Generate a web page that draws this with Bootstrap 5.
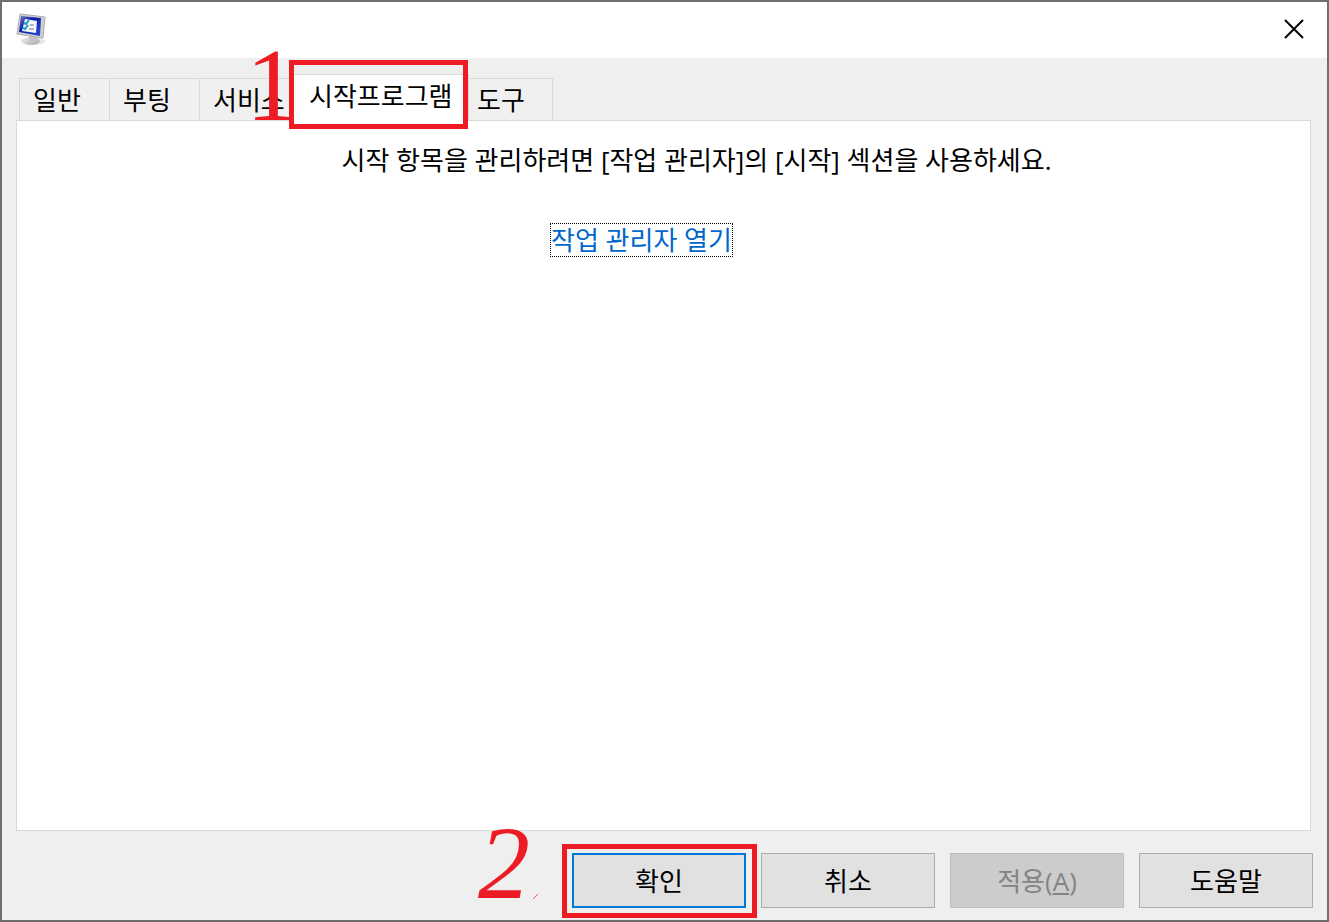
<!DOCTYPE html>
<html lang="ko">
<head>
<meta charset="utf-8">
<meta name="viewport" content="width=device-width, initial-scale=1">
<title>시스템 구성</title>
<link href="https://cdn.jsdelivr.net/npm/bootstrap@5.3.0/dist/css/bootstrap.min.css" rel="stylesheet">
<style>
  body { font-family: "Open Sans", "Noto Sans CJK KR", sans-serif; font-size: 26px; line-height: 32px; color: #000; }
  .dialog { background: #efefef; border: 2px solid #6f6f6f; }
  .titlebar { height: 56px; padding-left: 14px; background: #fff; }
  .close-btn { width: 66px; height: 54px; border: 0; background: transparent; }
  .content-area { padding: 0 14px 12px; }
  .tabs { padding: 16px 0 0 3px; }
  .tab-btn { width: 91px; height: 42px; margin-right: -1px; padding: 0 0 0 13px; border: 1px solid #d9d9d9; border-bottom: 0; background: #f0f0f0; color: #000; text-align: left; white-space: nowrap; }
  .tab-btn.current { height: 47px; width: 180px; padding: 0 0 4px 19px; margin-bottom: -1px; background: #fff; }
  .tab-btn.last { width: 85px; padding-left: 8px; }
  .panel { margin-right: 2px; background: #fff; border: 1px solid #d9d9d9; }
  .message { padding: 23px 0 0 66px; }
  .link-row { padding-right: 44px; }
  .task-link { color: #0066cc; outline: 1px dotted #000; }
  .actions { gap: 15px; padding-top: 22px; }
  .dlg-btn { display: block; width: 174px; height: 55px; padding: 0; border: 1px solid #adadad; background: #e1e1e1; color: #000; }
  .dlg-btn.default { border: 2px solid #0078d7; }
  .dlg-btn:disabled { border-color: #bfbfbf; background: #ccc; color: #838383; }
  .frame { position: absolute; border: 5px solid #ed1c24; pointer-events: none; }
  .frame-tab { inset: -14px 0 -9px 0; }
  .frame-ok { inset: -9px -11px -10px -10px; }
  .step { position: absolute; color: #ed1c24; font: 400 104px/80px "Liberation Serif", serif; pointer-events: none; }
  .step-one { right: 100%; top: -29px; margin-right: -9px; }
  .step-two { right: 100%; top: -30px; margin-right: 42px; font-style: italic; }
  .tick { position: absolute; right: 100%; top: 38px; margin-right: 32px; }
</style>
</head>
<body>
<main class="dialog d-flex flex-column min-vh-100">
  <header class="titlebar d-flex align-items-start justify-content-between">
    <svg class="mt-2" width="32" height="36" viewBox="0 0 32 36" aria-hidden="true">
      <defs>
        <linearGradient id="scr" x1="0" y1="0" x2="1" y2="1"><stop offset="0" stop-color="#6f80c8"/><stop offset=".4" stop-color="#0c1ba8"/><stop offset="1" stop-color="#2a50dc"/></linearGradient>
        <linearGradient id="base" x1="0" y1="0" x2="1" y2="1"><stop offset="0" stop-color="#f4f4f4"/><stop offset="1" stop-color="#a5a5a5"/></linearGradient>
      </defs>
      <ellipse cx="17" cy="31" rx="12" ry="4" fill="#e6e6e6"/>
      <ellipse cx="15" cy="31" rx="9" ry="4" fill="url(#base)"/>
      <path d="M13 25h8v6h-8z" fill="#c4c4c4"/>
      <path d="M4 4L29 7 27 28 1 24z" fill="#d0d0d0" stroke="#adadad"/>
      <path d="M5 6L25 8 24 26 3 22z" fill="url(#scr)"/>
      <path d="M9 9L21 11 20 23 6 21z" fill="#f4f8fc"/>
      <path d="M8 13l2 1 3-4M7 18l2 1 3-4" fill="none" stroke="#189bc0" stroke-width="2"/>
      <path d="M14 15h4M13 19h5" stroke="#737383"/>
    </svg>
    <button class="close-btn d-flex align-items-center justify-content-center" type="button" aria-label="닫기">
      <svg width="20" height="20" viewBox="0 0 20 20"><path d="M1 1L19 19M19 1L1 19" stroke="#000" stroke-width="2"/></svg>
    </button>
  </header>

  <div class="content-area flex-grow-1 d-flex flex-column">
    <div class="tabs d-flex align-items-end" role="tablist">
      <button class="tab-btn" type="button" role="tab">일반</button>
      <button class="tab-btn" type="button" role="tab">부팅</button>
      <button class="tab-btn" type="button" role="tab">서비스</button>
      <div class="position-relative z-1">
        <button class="tab-btn current d-block" type="button" role="tab" aria-selected="true">시작프로그램</button>
        <span class="frame frame-tab"></span>
        <span class="step step-one">1</span>
      </div>
      <button class="tab-btn last" type="button" role="tab">도구</button>
    </div>
    <section class="panel flex-grow-1 text-center" role="tabpanel">
      <p class="message mb-5">시작 항목을 관리하려면 [작업 관리자]의 [시작] 섹션을 사용하세요.</p>
      <div class="link-row"><a class="task-link d-inline-block text-decoration-none" href="#">작업 관리자 열기</a></div>
    </section>
    <footer class="actions d-flex justify-content-end">
      <div class="position-relative">
        <button class="dlg-btn default" type="button">확인</button>
        <span class="frame frame-ok"></span>
        <span class="step step-two">2</span>
        <svg class="tick" width="8" height="10" viewBox="0 0 8 10" aria-hidden="true"><path d="M1 8L6 3" stroke="#ed5c62"/></svg>
      </div>
      <button class="dlg-btn" type="button">취소</button>
      <button class="dlg-btn" type="button" disabled>적용(<u>A</u>)</button>
      <button class="dlg-btn" type="button">도움말</button>
    </footer>
  </div>
</main>
<script src="https://cdn.jsdelivr.net/npm/bootstrap@5.3.0/dist/js/bootstrap.bundle.min.js"></script>
</body>
</html>
